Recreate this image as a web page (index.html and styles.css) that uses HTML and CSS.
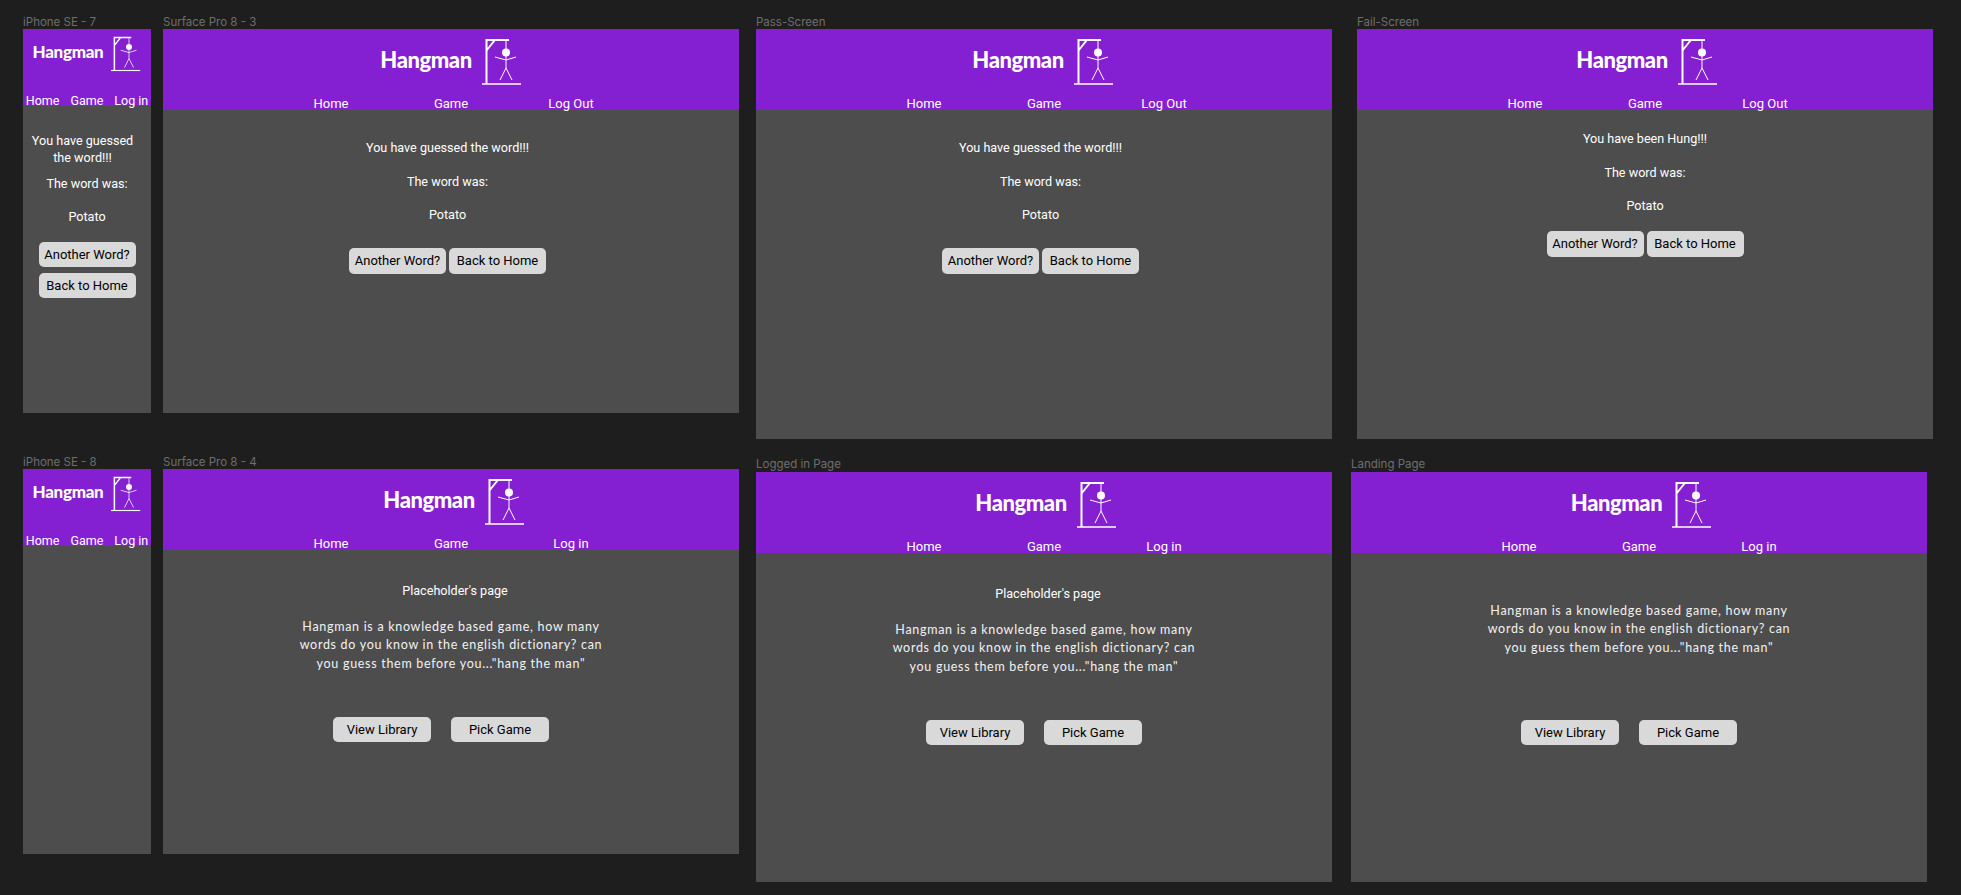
FILE: index.html
```html
<!DOCTYPE html>
<html lang="en">
<head>
    <meta charset="UTF-8">
    <meta name="viewport" content="width=device-width, initial-scale=1.0">
    <title>Hangman - Frames</title>
    <link rel="stylesheet" href="styles.css">
</head>
<body>
    <svg class="defs" width="0" height="0" aria-hidden="true">
        <symbol id="gallows" viewBox="0 0 40 46">
            <path class="wood" d="M4.5 45V1H27M12.5 1.5L4.5 11.5"/>
            <path class="base" d="M0 45H39"/>
            <path class="man" d="M24 1V10M24 17V29M13 18L24 21L34 18M24 29L18 41M24 29L30 41"/>
            <circle cx="24" cy="13.5" r="4" fill="#fff"/>
        </symbol>
    </svg>

    <!-- top row -->
    <div class="label label-phone-a">iPhone SE - 7</div>
    <section class="frame phone phone-a">
        <header class="top">
            <div class="brand"><h1>Hangman</h1><svg class="logo"><use href="#gallows"/></svg></div>
            <nav class="nav"><a>Home</a><a>Game</a><a>Log in</a></nav>
        </header>
        <div class="content result-phone">
            <p class="msg msg-wrap">You have guessed the word!!!</p>
            <p class="msg msg-word">The word was:</p>
            <p class="msg msg-potato">Potato</p>
            <div class="buttons buttons-stack"><button>Another Word?</button><button>Back to Home</button></div>
        </div>
    </section>

    <div class="label label-surface-a">Surface Pro 8 - 3</div>
    <section class="frame surface-a">
        <header class="top">
            <div class="brand"><h1>Hangman</h1><svg class="logo"><use href="#gallows"/></svg></div>
            <nav class="nav"><a>Home</a><a>Game</a><a>Log Out</a></nav>
        </header>
        <div class="content result">
            <p class="msg">You have guessed the word!!!</p>
            <p class="msg">The word was:</p>
            <p class="msg">Potato</p>
            <div class="buttons"><button>Another Word?</button><button>Back to Home</button></div>
        </div>
    </section>

    <div class="label label-pass">Pass-Screen</div>
    <section class="frame pass">
        <header class="top">
            <div class="brand"><h1>Hangman</h1><svg class="logo"><use href="#gallows"/></svg></div>
            <nav class="nav"><a>Home</a><a>Game</a><a>Log Out</a></nav>
        </header>
        <div class="content result">
            <p class="msg">You have guessed the word!!!</p>
            <p class="msg">The word was:</p>
            <p class="msg">Potato</p>
            <div class="buttons"><button>Another Word?</button><button>Back to Home</button></div>
        </div>
    </section>

    <div class="label label-fail">Fail-Screen</div>
    <section class="frame fail">
        <header class="top">
            <div class="brand"><h1>Hangman</h1><svg class="logo"><use href="#gallows"/></svg></div>
            <nav class="nav"><a>Home</a><a>Game</a><a>Log Out</a></nav>
        </header>
        <div class="content result result-fail">
            <p class="msg">You have been Hung!!!</p>
            <p class="msg">The word was:</p>
            <p class="msg">Potato</p>
            <div class="buttons"><button>Another Word?</button><button>Back to Home</button></div>
        </div>
    </section>

    <!-- bottom row -->
    <div class="label label-phone-b">iPhone SE - 8</div>
    <section class="frame phone phone-b">
        <header class="top">
            <div class="brand"><h1>Hangman</h1><svg class="logo"><use href="#gallows"/></svg></div>
            <nav class="nav"><a>Home</a><a>Game</a><a>Log in</a></nav>
        </header>
    </section>

    <div class="label label-surface-b">Surface Pro 8 - 4</div>
    <section class="frame surface-b">
        <header class="top">
            <div class="brand"><h1>Hangman</h1><svg class="logo"><use href="#gallows"/></svg></div>
            <nav class="nav"><a>Home</a><a>Game</a><a>Log in</a></nav>
        </header>
        <div class="content home">
            <p class="msg placeholder">Placeholder's page</p>
            <p class="about">Hangman is a knowledge based game, how many words do you know in the english dictionary? can you guess them before you..."hang the man"</p>
            <div class="buttons buttons-wide"><button>View Library</button><button>Pick Game</button></div>
        </div>
    </section>

    <div class="label label-logged">Logged in Page</div>
    <section class="frame logged">
        <header class="top">
            <div class="brand"><h1>Hangman</h1><svg class="logo"><use href="#gallows"/></svg></div>
            <nav class="nav"><a>Home</a><a>Game</a><a>Log in</a></nav>
        </header>
        <div class="content home">
            <p class="msg placeholder">Placeholder's page</p>
            <p class="about">Hangman is a knowledge based game, how many words do you know in the english dictionary? can you guess them before you..."hang the man"</p>
            <div class="buttons buttons-wide"><button>View Library</button><button>Pick Game</button></div>
        </div>
    </section>

    <div class="label label-landing">Landing Page</div>
    <section class="frame landing">
        <header class="top">
            <div class="brand"><h1>Hangman</h1><svg class="logo"><use href="#gallows"/></svg></div>
            <nav class="nav"><a>Home</a><a>Game</a><a>Log in</a></nav>
        </header>
        <div class="content home home-landing">
            <p class="about">Hangman is a knowledge based game, how many words do you know in the english dictionary? can you guess them before you..."hang the man"</p>
            <div class="buttons buttons-wide"><button>View Library</button><button>Pick Game</button></div>
        </div>
    </section>
</body>
</html>
```

FILE: styles.css
```css
html, body {
    margin: 0;
    height: 100%;
    overflow: hidden;
}
body {
    position: relative;
    background: #1e1e1e;
    font-family: Roboto, sans-serif;
    color: #fff;
}
.defs {
    position: absolute;
}

/* artboards sit on a free canvas */
.frame {
    position: absolute;
    width: 576px;
    background: #4d4d4d;
}
.label {
    position: absolute;
    font-family: Inter, sans-serif;
    font-size: 11.5px;
    line-height: 14px;
    color: #6e6e6e;
}
.phone-a { left: 23px; top: 29px; width: 128px; height: 384px; }
.surface-a { left: 163px; top: 29px; height: 384px; }
.pass { left: 756px; top: 29px; height: 410px; }
.fail { left: 1357px; top: 29px; height: 410px; }
.phone-b { left: 23px; top: 469px; width: 128px; height: 385px; }
.surface-b { left: 163px; top: 469px; height: 385px; }
.logged { left: 756px; top: 472px; height: 410px; }
.landing { left: 1351px; top: 472px; height: 410px; }

.label-phone-a { left: 23px; top: 15px; }
.label-surface-a { left: 163px; top: 15px; }
.label-pass { left: 756px; top: 15px; }
.label-fail { left: 1357px; top: 15px; }
.label-phone-b { left: 23px; top: 455px; }
.label-surface-b { left: 163px; top: 455px; }
.label-logged { left: 756px; top: 457px; }
.label-landing { left: 1351px; top: 457px; }

/* header */
.top {
    display: flex;
    flex-direction: column;
    height: 81px;
    background: #8520d2;
}
.brand {
    display: flex;
    flex-shrink: 0;
    justify-content: center;
    align-items: center;
    gap: 10px;
    height: 46px;
    margin-top: 10px;
}
.surface-b .brand { margin-left: 6px; }
.logged .brand, .fail .brand { margin-left: 4px; }
.landing .brand { margin-left: 5px; }
.pass .brand { margin-right: 2px; }
.brand h1 {
    margin: 0 0 4px;
    font-family: Lato, sans-serif;
    font-size: 22px;
    font-weight: 900;
    letter-spacing: -0.45px;
    line-height: 30px;
}
.logo {
    width: 40px;
    height: 46px;
}
.wood {
    fill: none;
    stroke: #fff;
    stroke-width: 2;
}
.base {
    fill: none;
    stroke: #fff;
    stroke-width: 1.5;
}
.man {
    fill: none;
    stroke: #fff;
    stroke-width: 1;
}
.nav {
    display: grid;
    flex-shrink: 0;
    grid-template-columns: repeat(3, 120px);
    justify-content: center;
    margin-top: 10px;
    font-size: 13px;
    line-height: 18px;
    text-align: center;
    white-space: nowrap;
}

/* phone header is smaller */
.phone .top {
    height: 77px;
}
.phone .brand {
    gap: 8px;
    height: 36px;
    margin-top: 7px;
}
.phone .brand h1 {
    font-size: 17px;
    letter-spacing: -0.3px;
}
.phone .logo {
    width: 30px;
    height: 36px;
}
.phone .nav {
    display: flex;
    justify-content: center;
    gap: 11px;
    margin-top: 20px;
    font-size: 12.5px;
}

/* page body */
.content {
    display: flex;
    flex-direction: column;
    align-items: center;
}
.msg {
    margin: 0;
    font-size: 12.6px;
    line-height: 18px;
    text-align: center;
}
.buttons {
    display: flex;
    gap: 3px;
}
button {
    width: 97px;
    height: 26px;
    padding: 0;
    border: none;
    border-radius: 5px;
    background: #d9d9d9;
    color: #000;
    font-family: Roboto, sans-serif;
    font-size: 13px;
}

.result {
    margin-right: 7px;
    padding-top: 29px;
}
.result .msg {
    margin-bottom: 15.5px;
}
.result .buttons {
    margin-top: 8px;
}
.result-fail {
    margin-right: 0;
    padding-top: 20px;
}
.result-fail .buttons {
    margin-top: 0;
}

.result-phone {
    padding-top: 26px;
}
.msg-wrap {
    width: 110px;
    margin-right: 9px;
    line-height: 17px;
}
.msg-word {
    margin-top: 9px;
}
.msg-potato {
    margin-top: 15px;
}
.buttons-stack {
    flex-direction: column;
    gap: 6px;
    margin-top: 16px;
}
.buttons-stack button {
    height: 25px;
}

.home {
    padding-top: 32px;
}
.placeholder {
    margin-left: 8px;
}
.about {
    width: 318px;
    margin: 18px 0 0;
    font-family: Lato, sans-serif;
    font-size: 12.5px;
    letter-spacing: 0.7px;
    line-height: 18.3px;
    text-align: center;
    color: #f2f2f2;
}
.buttons-wide {
    gap: 20px;
    margin-top: 44px;
    margin-right: 20px;
}
.buttons-wide button {
    width: 98px;
    height: 25px;
}
.home-landing {
    padding-top: 31px;
}
.home-landing .buttons-wide {
    margin-top: 63px;
}
```
